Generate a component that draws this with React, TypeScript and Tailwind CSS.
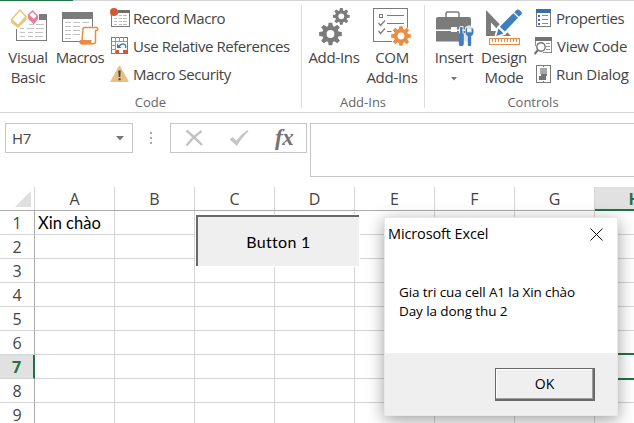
import React from "react";

const UI = "font-['Open_Sans','Noto_Sans',sans-serif]";
const CELL = "font-['Lato','Open_Sans',sans-serif]";

const gear = (cx: number, cy: number, r: number, n: number, inner = 0.72) => {
  const pts: string[] = [];
  for (let i = 0; i < n; i++) {
    const a = (i / n) * Math.PI * 2;
    const w = Math.PI / n;
    [
      [-0.75, inner],
      [-0.42, 1],
      [0.42, 1],
      [0.75, inner],
    ].forEach(([k, m]) => {
      const t = a + w * k;
      pts.push(`${(cx + Math.cos(t) * r * m).toFixed(2)} ${(cy + Math.sin(t) * r * m).toFixed(2)}`);
    });
  }
  const h = r * 0.34;
  return `M${pts.join("L")}Z M${cx - h} ${cy}a${h} ${h} 0 1 0 ${h * 2} 0a${h} ${h} 0 1 0 ${-h * 2} 0Z`;
};

const VisualBasicIcon = () => (
  <svg width="38" height="36" viewBox="0 0 38 36" className="block">
    <g shapeRendering="crispEdges">
      <path d="M7 7H36V33H7Z" fill="#fff" />
      <path d="M30 6H38V12H30Z" fill="#7b7b7b" />
      <path d="M7.500 21V32.500H37.500V11" fill="none" stroke="#7b7b7b" />
      <path d="M20 16.500h5m2 0h8M11 20.500h4m3 0h7m2 0h8M11 24.500h5m3 0h5m2 0h8M11 28.500h5m3 0h5m2 0h8" stroke="#c3c3c3" fill="none" />
    </g>
    <path d="M2.500 11.500 11 2 17 8.500 9 18Z" fill="#fff" stroke="#ebc479" strokeWidth="1.500" />
    <path d="M2.500 11.500 9 17 17 8.500V12L9 19.500 2.500 14.500Z" fill="#efc57a" stroke="#efc57a" />
    <path d="M19.500 7 23.500 3 28.500 8 25 12Z" fill="#fff" stroke="#e58096" strokeWidth="1.500" />
    <path d="M19.500 7.500 25 12V15.500L19.500 11ZM25 12l3.500-4V11L25 15.500Z" fill="#e58096" stroke="#e58096" />
  </svg>
);

const MacrosIcon = () => (
  <svg width="38" height="38" viewBox="0 0 38 38" className="block">
    <g shapeRendering="crispEdges">
      <path d="M1.500 5V33.500H31.500V5" fill="#fff" stroke="#7b7b7b" />
      <path d="M1 4H32V11H1Z" fill="#7b7b7b" />
      <path d="M4 14.500h6m2 0h7m2 0h7M4 18.500h6m2 0h7M4 22.500h6m2 0h7M4 26.500h6m2 0h7M4 30.500h6" stroke="#c3c3c3" />
    </g>
    <path d="M24 19.500H36Q37.500 21 36 22.500H34.500V34.500Q33 36.500 31 35.500H20.500Q18 34 21 32.500L22 21Q22 19.500 24 19.500Z" fill="#fff" stroke="#eb8c43" strokeWidth="1.500" />
    <path d="M19 32H31Q29 34 31.500 36.500H20Q17.500 35 19 32Z" fill="#eb8c43" />
  </svg>
);

const RecordIcon = () => (
  <svg width="21" height="20" viewBox="0 0 21 20" className="block">
    <g shapeRendering="crispEdges">
      <path d="M1.500 6V18.500H19.500V3" fill="#fff" stroke="#7b7b7b" />
      <path d="M8 2H20V5H8Z" fill="#6f6f6f" />
      <path d="M9 7.500h3m1 0h4M4 10.500h3m2 0h3m1 0h4M4 13.500h3m2 0h3m1 0h4M4 16.500h3m2 0h3m1 0h4" stroke="#bbb" />
    </g>
    <circle cx="4" cy="4" r="4" fill="#d65532" />
  </svg>
);

const RelativeIcon = () => (
  <svg width="21" height="20" viewBox="0 0 21 20" className="block">
    <g shapeRendering="crispEdges">
      <path d="M1.500 1.500H17.500V17.500H1.500Z" fill="#fff" stroke="#7b7b7b" />
      <path d="M5.500 1V18M9.500 1V6M13.500 1V6M1 5.500H18M1 9.500H6M1 13.500H6" stroke="#999" />
      <path d="M6 14H9V18H6ZM13 14H18V18H13Z" fill="#d65532" />
    </g>
    <path d="M9 10.500Q11 7.500 13.500 8Q16.500 8.500 15.500 12" fill="none" stroke="#3b78b5" strokeWidth="1.400" />
    <path d="M7 7.500V12H11.500Z" fill="#3b78b5" />
  </svg>
);

const WarningIcon = () => (
  <svg width="21" height="20" viewBox="0 0 21 20" className="block">
    <path d="M9.500 2 18.300 17.500H.700Z" fill="#e8c182" stroke="#e8c182" strokeLinejoin="round" />
    <path d="M8.300 6.500h2.400L10.300 13H8.700ZM8.500 14.300h2.100v2H8.500Z" fill="#444" />
  </svg>
);

const GearsIcon = () => (
  <svg width="38" height="41" viewBox="0 0 38 41" className="block" fill="#7b7b7b" fillRule="evenodd">
    <path d={gear(15.500, 29, 11.500, 8)} />
    <path d={gear(26.300, 11.300, 8.500, 8)} />
  </svg>
);

const ComIcon = () => (
  <svg width="40" height="41" viewBox="0 0 40 41" className="block">
    <g shapeRendering="crispEdges" fill="none">
      <path d="M1.500 3.500H35.500V36.500H1.500Z" fill="#fff" stroke="#7b7b7b" />
      <path d="M7.500 9.500H10.500V12.500H7.500Z" stroke="#7b7b7b" />
      <path d="M15 10.500H32M15 18.500H32M15 26.500H20" stroke="#7b7b7b" />
    </g>
    <path d="M6.500 18 8.500 20.500 13 15.500M6.500 26 8.500 28.500 13 23.500" stroke="#7b7b7b" strokeWidth="1.300" fill="none" />
    <circle cx="29" cy="31" r="10.500" fill="#fff" />
    <path d={gear(29, 31, 10, 8)} fill="#eb8c43" fillRule="evenodd" />
  </svg>
);

const ToolboxIcon = () => (
  <svg width="40" height="42" viewBox="0 0 40 42" className="block">
    <path d="M12 12V8.500Q12 7 13.500 7H23.500Q25 7 25 8.500V12" fill="none" stroke="#7b7b7b" strokeWidth="1.500" />
    <path d="M2 14Q2 12 4 12H35Q37 12 37 14V24.500H2Z M2 26H37V36.500H2Z" fill="#7b7b7b" />
    <path d="M17 22H23V27H17Z" fill="#fff" />
    <path d="M25 22.500 26 21H29.500V28H31V22L34 20.500H38L40 23V29L38.500 31V42H25Z" fill="#fff" opacity=".8" />
    <path d="M26 22h2.500v6.500h1.300v10q0 2.500-1.500 2.500h-2q-1.500 0-1.500-2.500v-10H26ZM31.500 24.500l1.500-2.300v5h4.500v-5l2 2.300v3Q39.300 30 37.200 31v9.500q-1.700 1.500-3.400 0V31Q31.500 30 31.500 27.500Z" fill="#3f7fbd" />
  </svg>
);

const DesignIcon = () => (
  <svg width="40" height="42" viewBox="0 0 40 42" className="block">
    <path d="M2 5V31H27ZM7 17.500 15 26H7Z" fill="#7b7b7b" fillRule="evenodd" />
    <path d="m10 33 3-11L31 3.500 39 10 21 30Z" fill="#fff" />
    <path d="m12.300 31 2.200-7.500 5 5ZM15.800 21.800 29.300 8.300 34 12.800 20.800 26.500ZM30.300 7.200 33 4.600Q34 4 35.300 5L37.500 7Q38.300 8.200 37.500 9.300L35 11.700Z" fill="#3f7fbd" />
    <path d="M5.500 33.500H35.500V39.500H5.500Z" fill="#fff" stroke="#eb8c43" shapeRendering="crispEdges" />
    <path d="M8.500 34v3m3-3v3m3-3v3m3-3v3m3-3v3m3-3v3m3-3v3m3-3v3m3-3v3" stroke="#eb8c43" shapeRendering="crispEdges" />
  </svg>
);

const PropertiesIcon = () => (
  <svg width="20" height="20" viewBox="0 0 20 20" className="block" shapeRendering="crispEdges">
    <path d="M2.500 2V18.500H16.500V2" fill="#fff" stroke="#7b7b7b" />
    <path d="M2 1H17V5H2Z" fill="#3b6ea8" />
    <path d="M4 7.500h2m-2 4h2m-2 4h2" stroke="#3b6ea8" strokeWidth="2" />
    <path d="M8 7.500h6m-6 4h6m-6 4h6" stroke="#8c8c8c" />
  </svg>
);

const ViewCodeIcon = () => (
  <svg width="20" height="20" viewBox="0 0 20 20" className="block">
    <g shapeRendering="crispEdges">
      <path d="M1.500 2V10M17.500 2V16.500H9" fill="none" stroke="#8c8c8c" />
      <path d="M1 1H18V5H1Z" fill="#737373" />
      <path d="M3 7.500h2m7 0h4m-4 3h4m-4 3h4" stroke="#999" />
    </g>
    <circle cx="7" cy="11" r="4.200" fill="#fff" stroke="#737373" strokeWidth="1.400" />
    <path d="m4 14-3.500 4" stroke="#737373" strokeWidth="2.200" />
  </svg>
);

const RunIcon = () => (
  <svg width="20" height="20" viewBox="0 0 20 20" className="block" shapeRendering="crispEdges">
    <path d="M2.500 1.500H16.500V18.500H2.500Z" fill="#fff" stroke="#7b7b7b" />
    <path d="M6 4H13V10H6Z" fill="#a8a8a8" />
    <path d="M7 10H13V12H7ZM5 12H12V16H5Z" fill="#737373" />
    <path d="M9 2h1v1h-1zM9 17h1v1h-1z" fill="#777" />
  </svg>
);

type ItemProps = { icon: React.ReactNode; label: string; track: string };
const Item = ({ icon, label, track }: ItemProps) => (
  <div className="flex h-7 items-center text-[15px] leading-7 whitespace-nowrap">
    {icon}
    <span className={track}>{label}</span>
  </div>
);

type ToolProps = { icon: React.ReactNode; lines: string[]; width: string; tracks: string[]; shift?: string; arrow?: boolean };
const Tool = ({ icon, lines, width, tracks, shift = "", arrow }: ToolProps) => (
  <div className={`flex shrink-0 flex-col items-center ${width}`}>
    <div className={`flex h-[42px] items-start ${shift}`}>{icon}</div>
    {lines.map((l, i) => (
      <div key={l} className={`h-5 text-[15px] leading-5 whitespace-nowrap ${tracks[i]}`}>{l}</div>
    ))}
    {arrow && (
      <svg width="6" height="4" className="mt-[10px]">
        <path d="M0 0H6L3 3.500Z" fill="#777" />
      </svg>
    )}
  </div>
);

const Group = ({ label, width, pad, children, last }: { label: string; width: string; pad: string; children: React.ReactNode; last?: boolean }) => (
  <div className={`mt-1 flex h-[103px] shrink-0 flex-col ${width} ${last ? "" : "border-r border-[#dcdcdc]"}`}>
    <div className={`flex h-[88px] ${pad}`}>{children}</div>
    <div className="h-[15px] text-center text-[13px] leading-[19px] text-[#666]">{label}</div>
  </div>
);

const cols = ["A", "B", "C", "D", "E", "F", "G", "H"];
const rows = [1, 2, 3, 4, 5, 6, 7, 8, 9];

export default function App() {
  return (
    <div className={`relative h-[423px] w-[634px] overflow-hidden bg-white text-[#444] ${UI}`}>
      <div className="flex h-px">
        <div className="w-[73px] bg-[#217346]" />
        <div className="flex-1 bg-[#d4d4d4]" />
      </div>
      <div className="flex h-[112px] border-b border-[#d4d4d4]">
        <Group label="Code" width="w-[302px]" pad="">
          <Tool icon={<VisualBasicIcon />} lines={["Visual", "Basic"]} width="w-14" tracks={["tracking-[-0.3px]", "tracking-[-0.3px]"]} shift="pt-[3px]" />
          <Tool icon={<MacrosIcon />} lines={["Macros"]} width="w-12" tracks={["tracking-[-0.5px]"]} shift="pt-[3px]" />
          <div className="-mt-px ml-[6px] flex flex-col">
            <Item icon={<RecordIcon />} label="Record Macro" track="ml-[2px] tracking-[-0.42px]" />
            <Item icon={<RelativeIcon />} label="Use Relative References" track="ml-[2px] tracking-[-0.44px]" />
            <Item icon={<WarningIcon />} label="Macro Security" track="ml-[2px] tracking-[-0.44px]" />
          </div>
        </Group>
        <Group label="Add-Ins" width="w-[123px]" pad="pl-1">
          <Tool icon={<GearsIcon />} lines={["Add-Ins"]} width="w-14" tracks={["tracking-[-0.3px]"]} />
          <Tool icon={<ComIcon />} lines={["COM", "Add-Ins"]} width="w-[60px]" tracks={["tracking-[-0.3px]", "tracking-[-0.3px]"]} />
        </Group>
        <Group label="Controls" width="w-[216px]" pad="pl-[3px]" last>
          <Tool icon={<ToolboxIcon />} lines={["Insert"]} width="w-[52px]" tracks={["tracking-[-0.3px]"]} arrow />
          <Tool icon={<DesignIcon />} lines={["Design", "Mode"]} width="w-12" tracks={["tracking-[-0.3px]", "tracking-[-0.3px]"]} />
          <div className="-mt-px ml-[6px] flex flex-col">
            <Item icon={<PropertiesIcon />} label="Properties" track="ml-[2px] tracking-[-0.44px]" />
            <Item icon={<ViewCodeIcon />} label="View Code" track="ml-[3px] tracking-[-0.3px]" />
            <Item icon={<RunIcon />} label="Run Dialog" track="ml-[2px] tracking-[-0.3px]" />
          </div>
        </Group>
      </div>

      <div className="flex h-[74px] items-start pt-[10px] pl-[5px]">
        <div className="flex h-[30px] w-32 items-center justify-between border border-[#c6c6c6] pr-2 pl-[6px] text-[15px]">
          <span className="tracking-[-0.3px]">H7</span>
          <svg width="8" height="5">
            <path d="M0 0H8L4 4.500Z" fill="#777" />
          </svg>
        </div>
        <div className="mt-[9px] ml-[17px] flex w-[2px] flex-col gap-[3px]">
          <i className="h-[2px] bg-[#aaa]" />
          <i className="h-[2px] bg-[#aaa]" />
          <i className="h-[2px] bg-[#aaa]" />
        </div>
        <div className="ml-[18px] flex h-[30px] w-[137px] items-center border border-[#c6c6c6] pl-[14px]">
          <svg width="18" height="18" viewBox="0 0 18 18">
            <path d="M1.500 1.500Q8 7 17 16M16.500 2Q8 8 1.500 16.500" fill="none" stroke="#c3c3c3" strokeWidth="2.400" />
          </svg>
          <svg width="20" height="18" viewBox="0 0 20 18" className="ml-[26px]">
            <path d="M.5 10.500 3.500 8 7.500 11.500Q12 5 18.500 1L19.500 2.500Q13 8 8 17Z" fill="#c6c6c6" />
          </svg>
          <span className="-mt-px ml-[26px] font-['Liberation_Serif',serif] text-[23px] leading-[24px] font-bold tracking-[-0.5px] text-[#737373] italic">fx</span>
        </div>
        <div className="ml-[3px] h-[54px] flex-1 border border-r-0 border-[#c6c6c6]" />
      </div>

      <div className="flex h-6 w-[700px] border-b border-[#ababab]">
        <div className="flex w-[35px] justify-end border-r border-[#d4d4d4] pt-1 pr-[3px]">
          <svg width="16" height="16">
            <path d="M16 0V16H0Z" fill="#dfdfdf" />
          </svg>
        </div>
        {cols.map((c) => (
          <div
            key={c}
            className={`w-20 border-r border-[#d4d4d4] text-center text-[16px] leading-[24px] ${c === "H" ? "-mb-px border-b-2 border-b-[#217346] bg-[#e1e1e1] font-bold text-[#217346]" : ""}`}
          >
            {c}
          </div>
        ))}
      </div>
      {rows.map((r) => (
        <div key={r} className="flex h-6 w-[700px]">
          <div
            className={`w-[35px] border-b border-b-[#d4d4d4] text-center text-[16px] leading-[25px] ${r === 7 ? "border-r-2 border-r-[#217346] bg-[#e1e1e1] font-bold text-[#217346]" : "border-r border-r-[#ababab]"}`}
          >
            {r}
          </div>
          {cols.map((c) => (
            <div
              key={c}
              className={`w-20 border-r border-b border-[#d4d4d4] pl-[3px] text-[16.5px] leading-6 text-black ${CELL} ${c === "H" && r === 6 ? "border-b-2 border-b-[#217346]" : ""} ${c === "H" && r === 7 ? "-mb-px border-b-2 border-b-[#217346]" : ""}`}
            >
              {c === "A" && r === 1 ? "Xin chào" : ""}
            </div>
          ))}
        </div>
      ))}

      <button className={`absolute top-[215px] left-[196px] h-[51px] w-[163px] border-t-2 border-l-2 border-[#696969] bg-[#efefef] text-[16px] tracking-[0.3px] text-black outline-1 outline-white ${CELL}`}>
        Button 1
      </button>

      <section className="absolute top-[217px] left-[384px] flex h-[199px] w-[234px] flex-col border border-[#e8e8e8] bg-white text-black shadow-[0_4px_16px_rgba(0,0,0,0.38)]">
        <header className="flex h-8 items-center justify-between pr-[14px] pl-[3px] text-[14.5px]">
          <span className="tracking-[-0.12px]">Microsoft Excel</span>
          <svg width="13" height="13">
            <path d="M.5.5 12.500 12.500M12.500.5.5 12.500" stroke="#111" />
          </svg>
        </header>
        <p className="h-[103px] pt-[33px] pl-[14px] text-[13.5px] leading-[19px] whitespace-pre tracking-[-0.1px]">{"Gia tri cua cell A1 la Xin chào\nDay la dong thu 2"}</p>
        <footer className="flex flex-1 justify-end bg-[#efefef] pt-[15px] pr-[22px]">
          <button className="h-[33px] w-[100px] border border-r-2 border-b-2 border-[#696969] bg-[#efefef] pb-px text-[14px] shadow-[inset_-1px_-1px_#a0a0a0,inset_1px_1px_#fff]">OK</button>
        </footer>
      </section>
    </div>
  );
}
